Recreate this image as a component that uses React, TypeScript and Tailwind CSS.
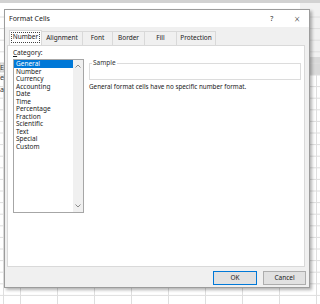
import React from "react";

const categories = [
  "General",
  "Number",
  "Currency",
  "Accounting",
  "Date",
  "Time",
  "Percentage",
  "Fraction",
  "Scientific",
  "Text",
  "Special",
  "Custom",
];

const tabs = [
  { label: "Number", width: "w-[33px]" },
  { label: "Alignment", width: "w-[41px]" },
  { label: "Font", width: "w-[30px]" },
  { label: "Border", width: "w-[32px]" },
  { label: "Fill", width: "w-[32px]" },
  { label: "Protection", width: "w-[39px]" },
];

// spreadsheet showing behind the dialog
const SheetBackdrop = () => {
  const cols = [3, 20, 57, 94, 131, 168, 205, 242, 279, 316];
  const rows = Array.from({ length: 26 }, (_, i) => 17 + i * 11.6);
  return (
    <svg
      className="absolute inset-0"
      width={320}
      height={304}
      viewBox="0 0 320 304"
    >
      <rect x={0} y={0} width={320} height={304} fill="#ffffff" />
      <rect x={0} y={0} width={320} height={3} fill="#d2d2d2" />
      <rect x={300} y={3} width={20} height={54} fill="#f1f1f1" />
      <rect x={300} y={57} width={20} height={18} fill="#d9d9d9" />
      {rows.map((y) => (
        <line key={y} x1={0} x2={320} y1={y} y2={y} stroke="#dedede" />
      ))}
      {cols.map((x) => (
        <line key={x} x1={x + 0.5} x2={x + 0.5} y1={75} y2={304} stroke="#dedede" />
      ))}
      <rect x={0} y={63} width={4} height={9} fill="#e6e6e6" stroke="#b5b5b5" strokeWidth={0.6} />
      <text x={0} y={70} fontSize={7} fill="#333" fontFamily="Noto Sans, sans-serif">E</text>
      <text x={0} y={80} fontSize={7} fill="#333" fontFamily="Noto Sans, sans-serif">e</text>
      <text x={0} y={92} fontSize={7} fill="#333" fontFamily="Noto Sans, sans-serif">a</text>
    </svg>
  );
};

const Chevron = ({ up }: { up?: boolean }) => (
  <svg width={6} height={4} viewBox="0 0 6 4">
    <path
      d={up ? "M0.5 3.5 L3 1 L5.5 3.5" : "M0.5 0.5 L3 3 L5.5 0.5"}
      fill="none"
      stroke="#8a8a8a"
      strokeWidth={1}
    />
  </svg>
);

const App = () => {
  return (
    <div className="relative w-[320px] h-[304px] overflow-hidden bg-white font-['Noto_Sans',sans-serif] text-[#1a1a1a]">
      <SheetBackdrop />
      <div className="relative ml-[4px] mt-[9px] w-[306px] h-[279px] border border-[#9c9c9c] bg-[#f0f0f0] shadow-[2px_2px_3px_rgba(0,0,0,0.3)] flex flex-col">
        {/* title bar */}
        <div className="h-[17px] bg-white flex items-center pl-[4px]">
          <span className="text-[7px] leading-none">Format Cells</span>
          <span className="ml-auto text-[7px] leading-none text-[#333]">?</span>
          <span className="ml-[21px] mr-[9px] text-[10px] leading-none font-light text-[#333]">
            ×
          </span>
        </div>

        {/* tabs */}
        <div className="flex pl-[4px] pt-[3px]">
          {tabs.map((tab, i) =>
            i === 0 ? (
              <div
                key={tab.label}
                className={`${tab.width} h-[15px] -mb-[1px] relative z-10 bg-white border border-b-0 border-[#d9d9d9] p-[1px] pb-[2px] flex`}
              >
                <span className="flex-1 flex items-center justify-center text-[6.5px] leading-none border border-dotted border-[#444]">
                  {tab.label}
                </span>
              </div>
            ) : (
              <div
                key={tab.label}
                className={`${tab.width} h-[14px] mt-[1px] bg-[#f0f0f0] border border-l-0 border-b-0 border-[#d9d9d9] flex items-center justify-center text-[6.5px] leading-none`}
              >
                {tab.label}
              </div>
            )
          )}
        </div>

        {/* tab panel */}
        <div className="ml-[2px] w-[298px] h-[222px] bg-white border border-[#d9d9d9] flex">
          <div className="pl-[5px] pt-[1px] flex flex-col">
            <span className="h-[12px] text-[6.5px] leading-[12px]">
              <span className="underline">C</span>ategory:
            </span>
            <div className="w-[71px] h-[154px] border border-[#a6a6a6] bg-white flex">
              <div className="flex-1 flex flex-col">
                {categories.map((c, i) => (
                  <div
                    key={c}
                    className={
                      i === 0
                        ? "h-[7.5px] pl-[2px] text-[6.5px] leading-[7.5px] bg-[#0078d7] text-white"
                        : "h-[7.5px] pl-[2px] text-[6.5px] leading-[7.5px]"
                    }
                  >
                    {c}
                  </div>
                ))}
              </div>
              <div className="w-[10px] bg-[#f0f0f0] flex flex-col items-center justify-between py-[4px]">
                <Chevron up />
                <Chevron />
              </div>
            </div>
          </div>

          <div className="ml-[5px] pt-[13px] flex flex-col">
            <fieldset className="w-[212px] h-[21px] border border-[#dcdcdc] px-[2px]">
              <legend className="text-[6.5px] leading-[8px] px-[1px] text-[#333]">Sample</legend>
            </fieldset>
            <p className="mt-[3px] text-[6.3px] leading-[8px]">
              General format cells have no specific number format.
            </p>
          </div>
        </div>

        {/* buttons */}
        <div className="mt-[4px] flex justify-end gap-[6px] pr-[3px]">
          <button className="w-[44px] h-[14px] border border-[#0078d7] bg-[#e1e1e1] text-[6.5px] leading-none">
            OK
          </button>
          <button className="w-[43px] h-[14px] border border-[#adadad] bg-[#e1e1e1] text-[6.5px] leading-none">
            Cancel
          </button>
        </div>
      </div>
    </div>
  );
};

export default App;
